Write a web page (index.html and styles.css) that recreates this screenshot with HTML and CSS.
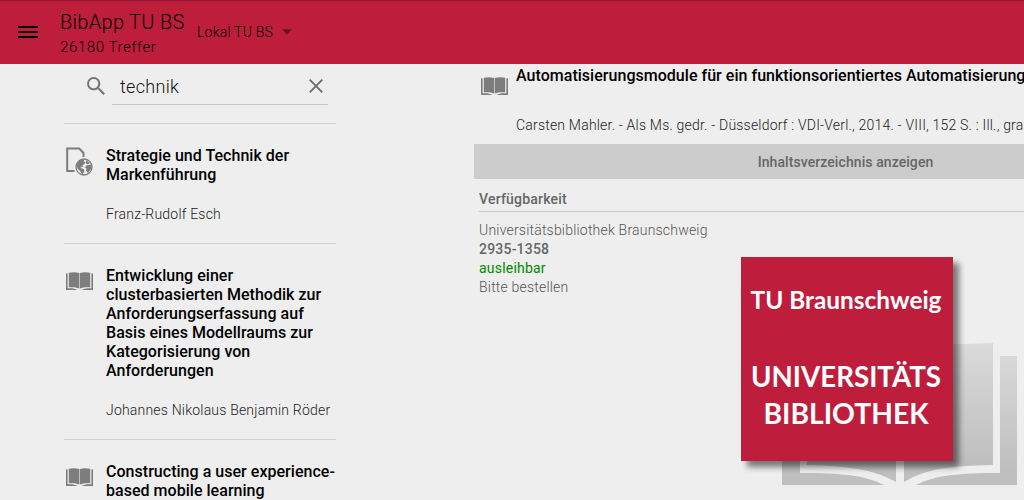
FILE: index.html
```html
<!DOCTYPE html>
<html lang="de">
<head>
<meta charset="utf-8">
<title>BibApp TU BS</title>
<link rel="stylesheet" href="styles.css">
</head>
<body>
<svg class="defs" width="0" height="0" aria-hidden="true">
  <symbol id="book" viewBox="0 0 27 18">
    <path fill="#aaa" d="M0 1.500h2V18H0zM25 1.500h2V18h-2z"/>
    <path fill="#7d7d7d" d="M0 1.500h1V16.300c5-.3 8 .2 10.500 1.700H0zM27 1.500h-1V16.300c-5-.3-8 .2-10.500 1.700H27z"/>
    <path fill="#7d7d7d" d="M2.800.7C7-.2 10 0 13.200 1V16.500C10 15.200 7 15 2.800 15.300zM24.200.7C20-.2 17 0 13.800 1V16.500c3.200-1.300 6.200-1.500 10.400-1.200z"/>
  </symbol>
</svg>
<header class="bar">
  <svg class="burger" width="20" height="12" viewBox="0 0 20 12"><path d="M0 0h20v2H0zM0 5h20v2H0zM0 10h20v2H0z"/></svg>
  <div class="heading">
    <h1 class="app-name">BibApp TU BS</h1>
    <p class="hits">26180 Treffer</p>
  </div>
  <div class="scope"><span>Lokal TU BS</span><svg width="10" height="6" viewBox="0 0 10 6"><path fill="#6b1024" d="M0 .3h10L5 5.600z"/></svg></div>
</header>
<div class="columns">
  <aside class="results">
    <div class="search">
      <svg class="lens" width="18" height="18" viewBox="3 3 17.500 17.500"><path fill="#757575" d="M15.500 14h-.79l-.28-.27A6.471 6.471 0 0 0 16 9.500 6.500 6.500 0 1 0 9.500 16c1.610 0 3.090-.59 4.230-1.570l.27.280v.79l5 4.990L20.490 19l-4.990-5zm-6 0C7.010 14 5 11.990 5 9.500S7.010 5 9.500 5 14 7.010 14 9.500 11.990 14 9.500 14z"/></svg>
      <div class="field"><span>technik</span><svg width="14" height="14" viewBox="0 0 14 14"><path d="M.7.7l12.600 12.600M13.300.7L.7 13.300" stroke="#6a6a6a" stroke-width="1.800"/></svg></div>
    </div>
    <article class="item">
      <svg class="icon doc" width="27" height="29" viewBox="0 0 27 29">
        <path d="M8.500 24H1.200V1.500h12l4.300 4.500v4" fill="none" stroke="#7d7d7d" stroke-width="2"/>
        <circle cx="18" cy="20" r="8" fill="#eee" stroke="#7d7d7d" stroke-width="1.300"/>
        <path fill="#7d7d7d" d="M10.500 18c1-3 4-6 8-5.500l-1 2 2 .5-1 2-2 1 1 2-2-.5-1 1.500 3 1 1 2-2 3.500-2-3-3-3zM20 13l4 3-2 1.500-2-1zM20.500 18.500l5-1v4l-3.500 4.500-2-2.500.5-2-1.500-1z"/>
      </svg>
      <div><h2 class="title">Strategie und Technik der<br>Markenführung</h2><p class="author">Franz-Rudolf Esch</p></div>
    </article>
    <article class="item">
      <svg class="icon" width="27" height="18"><use href="#book"/></svg>
      <div><h2 class="title">Entwicklung einer<br>clusterbasierten Methodik zur<br>Anforderungserfassung auf<br>Basis eines Modellraums zur<br>Kategorisierung von<br>Anforderungen</h2><p class="author">Johannes Nikolaus Benjamin Röder</p></div>
    </article>
    <article class="item">
      <svg class="icon" width="27" height="18"><use href="#book"/></svg>
      <div><h2 class="title">Constructing a user experience-<br>based mobile learning</h2></div>
    </article>
  </aside>
  <main class="detail">
    <div class="record">
      <svg class="icon" width="27" height="18"><use href="#book"/></svg>
      <div><h2 class="title">Automatisierungsmodule für ein funktionsorientiertes Automatisierung</h2>
      <p class="meta">Carsten Mahler. - Als Ms. gedr. - Düsseldorf : VDI-Verl., 2014. - VIII, 152 S. : Ill., gra</p></div>
    </div>
    <div class="toc">Inhaltsverzeichnis anzeigen</div>
    <section class="stock">
      <h3 class="stock-title">Verfügbarkeit</h3>
      <p class="library">Universitätsbibliothek Braunschweig</p>
      <p class="number">2935-1358</p>
      <p class="available">ausleihbar</p>
      <p class="order">Bitte bestellen</p>
    </section>
  </main>
</div>
<svg class="brand" width="294" height="255" viewBox="0 0 294 255">
  <defs>
    <linearGradient id="page" x1="0" y1="98" x2="0" y2="220" gradientUnits="userSpaceOnUse"><stop offset="0" stop-color="#dadada"/><stop offset="1" stop-color="#bfbfbf"/></linearGradient>
    <linearGradient id="edge" x1="0" y1="111" x2="0" y2="225" gradientUnits="userSpaceOnUse"><stop offset="0" stop-color="#d8d8d8"/><stop offset="1" stop-color="#bfbfbf"/></linearGradient>
    <filter id="soft" x="-10%" y="-10%" width="120%" height="120%"><feGaussianBlur stdDeviation="3"/></filter>
  </defs>
  <path fill="url(#page)" d="M77 98h89v139c-19-11-43-16-89-17zM174 101q30-1 89-3v122c-46 1-67 4-89 17z"/>
  <path fill="url(#edge)" d="M52 111h18v117c42 0 64 2 84 12H52zM287 111h-17v117c-42 0-64 2-84 12h101z"/>
  <rect x="17" y="18" width="212" height="204" fill="#000" opacity=".5" filter="url(#soft)"/>
  <rect x="11" y="12" width="212" height="204" fill="#be1e3c"/>
  <g class="brand-text">
    <text x="20.500" y="64" font-size="24" textLength="191" lengthAdjust="spacingAndGlyphs">TU Braunschweig</text>
    <text x="21" y="142" font-size="28" textLength="190" lengthAdjust="spacingAndGlyphs">UNIVERSITÄTS</text>
    <text x="33.500" y="178.500" font-size="28" textLength="165" lengthAdjust="spacingAndGlyphs">BIBLIOTHEK</text>
  </g>
</svg>
</body>
</html>
```
FILE: styles.css
```css
* { box-sizing: border-box; }
body { margin: 0; width: 1024px; height: 500px; overflow: hidden; background: #eee; font-family: Roboto, sans-serif; position: relative; }
h1, h2, h3, p { margin: 0; font-weight: 400; }
svg { display: block; flex: none; }
.defs { position: absolute; }
.bar { height: 64px; display: flex; align-items: flex-start; padding-left: 18px; background: linear-gradient(#841229 0, #ac1935 1px, #b91d3a 2px, #be1e3c 4px); }
.burger { margin-top: 26px; }
.heading { width: 137px; margin-left: 22px; padding-top: 10px; white-space: nowrap; }
.app-name { font-size: 20px; line-height: 24px; letter-spacing: .3px; font-weight: 300; }
.hits { padding-top: 1px; font-size: 15px; line-height: 24px; letter-spacing: .6px; font-weight: 300; }
.scope { display: flex; align-items: center; gap: 10px; width: 110px; padding-top: 22px; font-size: 14px; line-height: 20px; font-weight: 300; letter-spacing: .2px; }
.scope span { width: 75px; white-space: nowrap; }
.columns { display: flex; height: 436px; }
.results { width: 272px; margin-left: 64px; flex: none; }
.search { display: flex; height: 60px; padding: 4px 8px 0 23px; border-bottom: 1px solid #d2d2d2; }
.lens { margin-top: 9px; }
.field { display: flex; justify-content: space-between; align-items: center; width: 216px; height: 37px; margin-left: 7px; padding: 0 5px 0 8px; border-bottom: 1px solid #c8c8c8; font-size: 18px; font-weight: 300; letter-spacing: .3px; color: #111; }
.item { display: flex; gap: 13px; padding: 22px 0 19px 2px; border-bottom: 1px solid #d2d2d2; }
.item .icon { margin-top: 6px; }
.item .doc { margin: 1px 0 -1px; }
.title { font-size: 16px; line-height: 19px; font-weight: 500; letter-spacing: .03px; white-space: nowrap; color: #000; }
.author { margin-top: 21px; font-size: 14px; line-height: 19px; color: #222; white-space: nowrap; font-weight: 300; letter-spacing: .2px; }
.detail { width: 550px; margin-left: 138px; flex: none; overflow: hidden; }
.record { display: flex; gap: 8px; height: 80px; padding: 2px 0 0 7px; }
.record .icon { margin-top: 11px; }
.meta { margin-top: 31px; font-size: 14px; line-height: 19px; color: #222; white-space: nowrap; font-weight: 300; letter-spacing: .2px; }
.toc { width: 743px; height: 35px; padding-top: 1px; background: #ccc; color: #666; font-size: 14px; line-height: 35px; font-weight: 500; letter-spacing: .08px; text-align: center; }
.stock { padding: 11px 0 0 5px; color: #555; font-size: 14px; line-height: 19px; font-weight: 300; letter-spacing: .2px; }
.stock-title { height: 22px; margin-bottom: 9px; border-bottom: 1px solid #c8c8c8; color: #666; font-size: 14px; line-height: 19px; font-weight: 500; }
.stock p { font-weight: inherit; }
.stock .number { color: #666; font-weight: 500; }
.available { color: #080; }
.stock .available { font-weight: 400; }
.brand { position: absolute; left: 730px; top: 245px; }
.brand-text { fill: #fff; font-family: Lato, sans-serif; font-weight: 700; }
```
